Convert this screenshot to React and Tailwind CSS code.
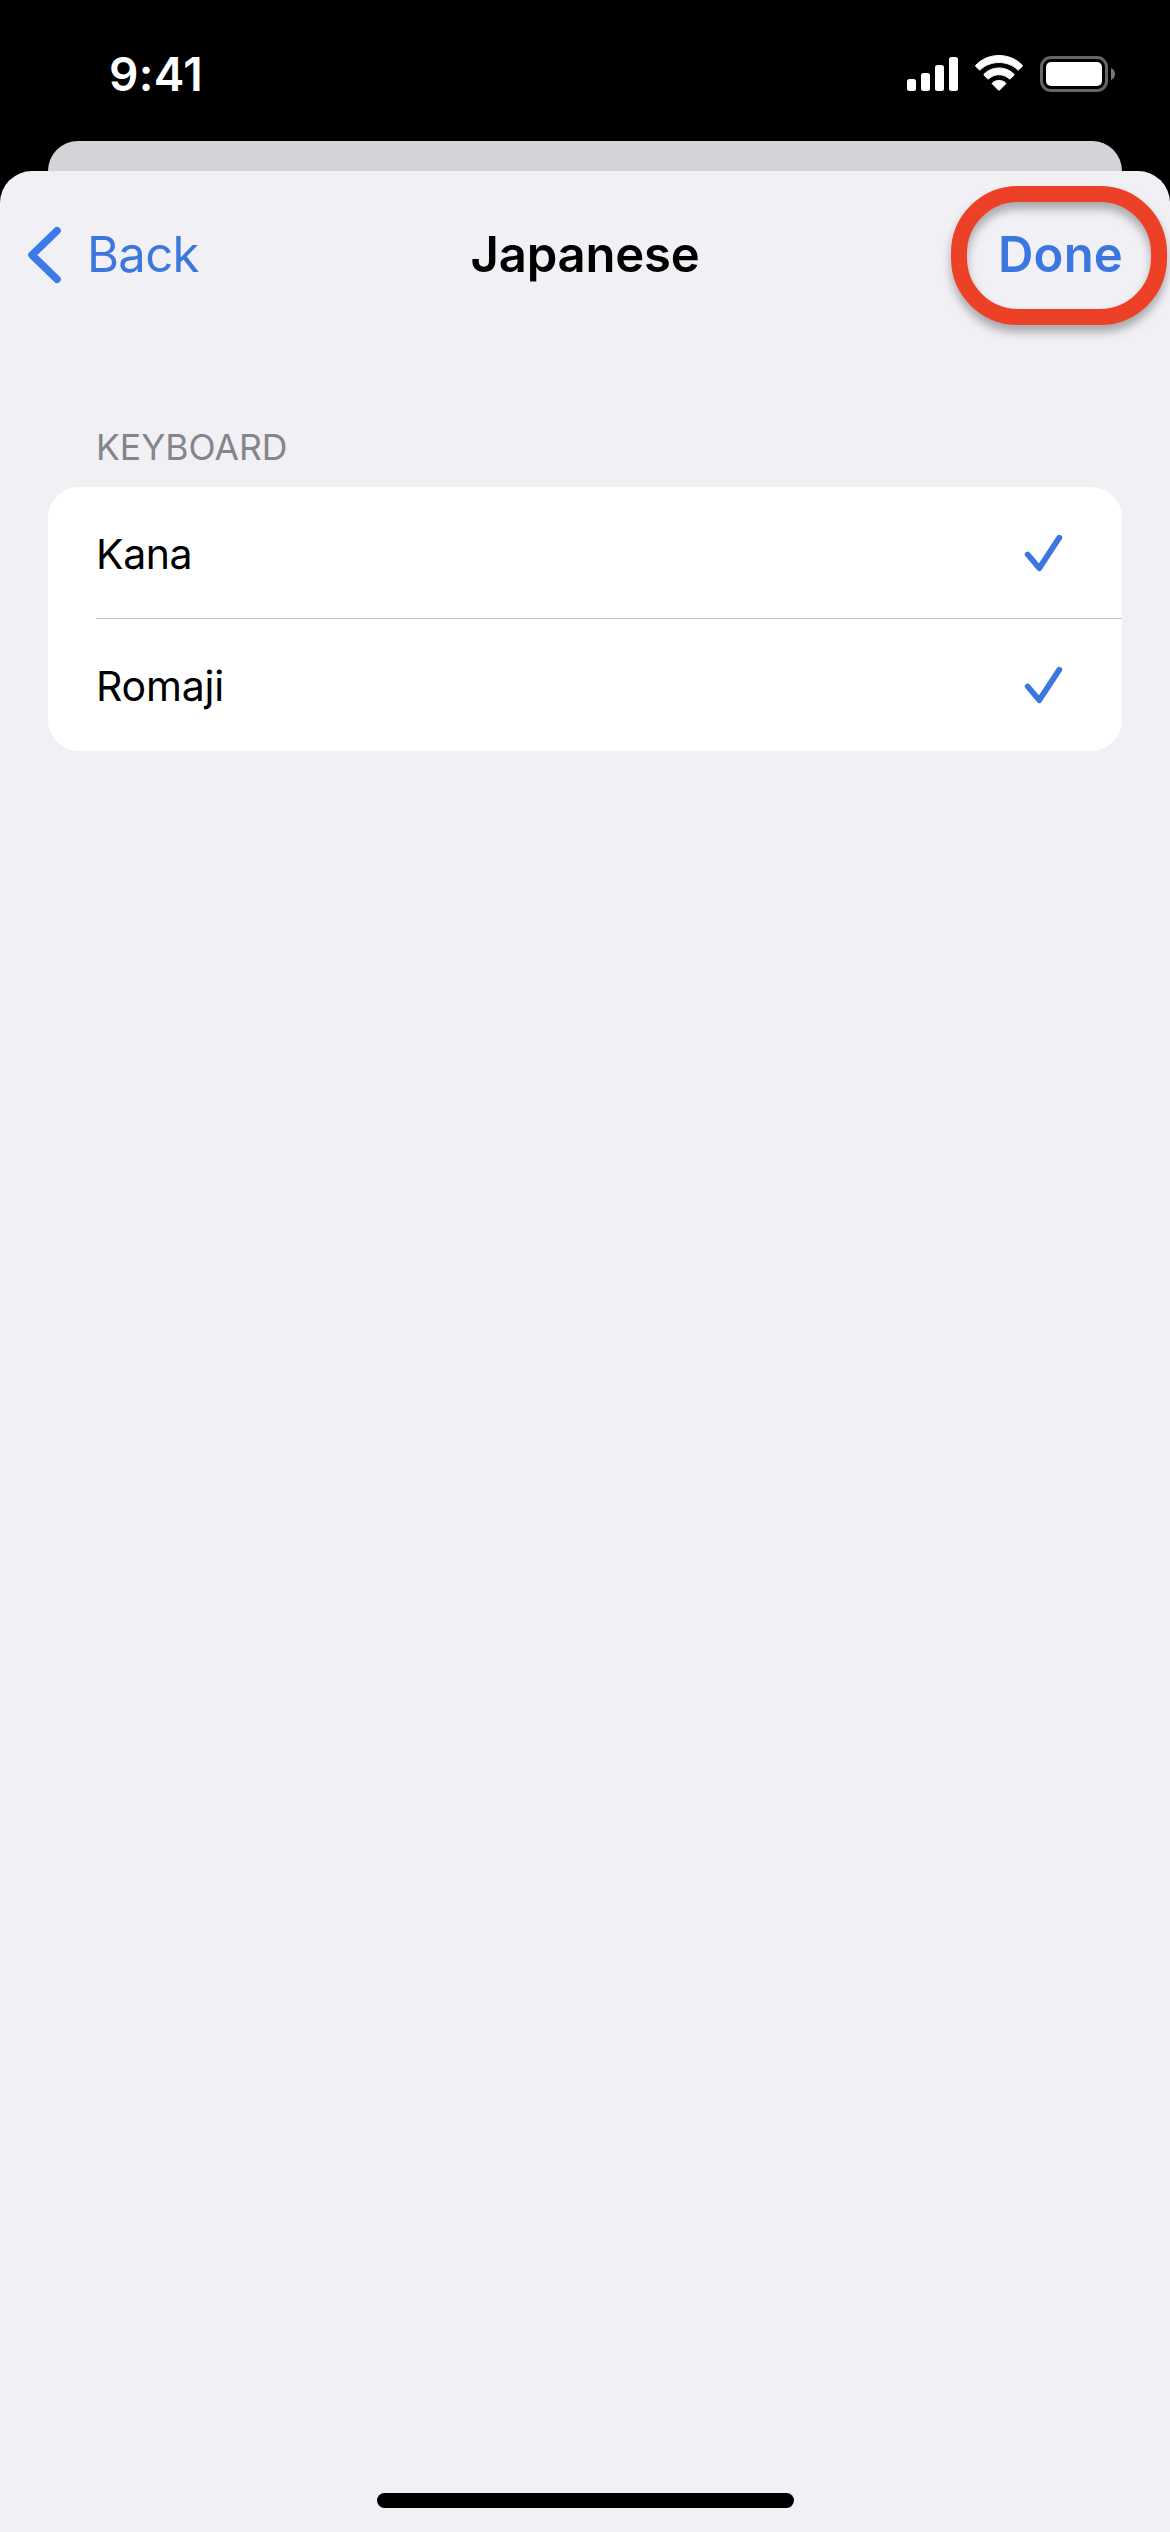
const keyboards = [
    { name: 'Kana', enabled: true, tracking: 'tracking-[-0.4px]' },
    { name: 'Romaji', enabled: true, tracking: 'tracking-[-0.2px]' }
];

const SignalIcon = () => (
    <svg width="51" height="34" viewBox="0 0 51 34" fill="#fff">
        <rect x="0" y="22" width="9" height="12" rx="2.5" />
        <rect x="14" y="16" width="9" height="18" rx="2.5" />
        <rect x="28" y="8" width="9" height="26" rx="2.5" />
        <rect x="42" y="0" width="9" height="34" rx="2.5" />
    </svg>
);

const WifiIcon = () => (
    <svg width="48" height="36" viewBox="0 0 48 36" fill="#fff" stroke="#fff" strokeLinejoin="round">
        <path strokeWidth="1" d="M24 .5C33 .5 41.200 4 47.300 10.300Q47.700 10.800 47.300 11.300L43.700 14.800Q43.200 15.200 42.700 14.800C37.600 9.900 31 7.500 24 7.500S10.400 9.900 5.300 14.800Q4.800 15.200 4.300 14.800L.7 11.300Q.3 10.800 .7 10.300C6.800 4 15 .5 24 .5Z" />
        <path strokeWidth="1" d="M24 13C29.800 13 35 15.200 39 19.200Q39.300 19.700 39 20.200L35.300 23.800Q34.800 24.200 34.300 23.800C31.500 21.200 28 19.700 24 19.700S16.500 21.200 13.700 23.800Q13.200 24.200 12.700 23.800L9 20.200Q8.700 19.700 9 19.200C13 15.200 18.200 13 24 13Z" />
        <path strokeWidth="1" d="M24 25.400C26.500 25.400 28.800 26.300 30.600 27.900Q31 28.400 30.600 28.900L24.500 35.100Q24 35.500 23.500 35.100L17.400 28.900Q17 28.400 17.400 27.900C19.200 26.300 21.500 25.400 24 25.400Z" />
    </svg>
);

const BatteryIcon = () => (
    <svg width="76" height="36" viewBox="0 0 76 36">
        <rect x="1.500" y="1.500" width="65" height="33" rx="9.500" fill="none" stroke="#666" strokeWidth="3" />
        <rect x="6" y="6" width="56" height="24" rx="5" fill="#fff" />
        <path d="M71 12c2.500 1 4 3.300 4 6s-1.500 5-4 6z" fill="#777" />
    </svg>
);

const CheckIcon = () => (
    <svg width="44" height="44" viewBox="0 0 44 44" fill="none" stroke="#3c77e0" strokeWidth="5.800" strokeLinecap="round" strokeLinejoin="round">
        <path d="M6.700 23.500 18.300 37.200 38.300 6.700" />
    </svg>
);

const StatusBar = () => (
    <div className="flex h-[141px] justify-between bg-black pl-[109px] pr-[54px] text-white">
        <span className="mt-11 text-[46px] leading-[61px] font-semibold tracking-[0.3px]">9:41</span>
        <div className="mt-14 flex h-9">
            <div className="mr-[17px] mt-px">
                <SignalIcon />
            </div>
            <div className="mr-[17px] -mt-px">
                <WifiIcon />
            </div>
            <BatteryIcon />
        </div>
    </div>
);

const NavBar = () => (
    <header className="relative grid h-[168px] grid-cols-3 items-center text-[49px] leading-[60px]">
        <button className="flex items-center pl-[26px] text-left text-[#3c77e0]">
            <svg width="36" height="58" viewBox="0 0 36 58" fill="none" stroke="#3c7aea" strokeWidth="7.500" strokeLinecap="round" strokeLinejoin="round">
                <path d="M31 4.700 6 29 31 53.300" />
            </svg>
            <span className="ml-[25px] tracking-[-0.7px]">Back</span>
        </button>
        <h1 className="text-center font-semibold tracking-[-0.2px] text-black">Japanese</h1>
        <button className="pr-[47px] text-right font-semibold tracking-[0.2px] text-[#3c77e0]">Done</button>
        {/* marker around the Done button */}
        <div className="pointer-events-none absolute top-[15px] right-[3px] h-[139px] w-[216px] rounded-[67px] border-[16px] border-[#ec4126] drop-shadow-[0_7px_5px_rgba(0,0,0,0.3)]"></div>
    </header>
);

const KeyboardList = () => (
    <section className="mx-12 mt-[91px]">
        <h2 className="mb-[21px] pl-12 text-[35.500px] leading-9 text-[#85858b]">KEYBOARD</h2>
        <ul className="overflow-hidden rounded-[31px] bg-white pl-12">
            {keyboards.map((item) => (
                <li key={item.name} className="flex h-[132px] items-center justify-between border-b border-[#c3c3c7] pr-[57px] last:border-b-0">
                    <span className={`mt-[2px] text-[41px] leading-[50px] text-black ${item.tracking}`}>{item.name}</span>
                    {item.enabled && <CheckIcon />}
                </li>
            ))}
        </ul>
    </section>
);

export default function App() {
    return (
        <div className="flex h-[2532px] w-[1170px] flex-col overflow-hidden bg-black font-[Inter,sans-serif]">
            <StatusBar />
            <div className="mx-12 h-[30px] shrink-0 rounded-t-[30px] bg-[#d4d3d8]"></div>
            <main className="flex flex-1 flex-col rounded-t-[32px] bg-[#f1f0f5]">
                <NavBar />
                <KeyboardList />
                <div className="mx-auto mt-auto mb-6 h-[15px] w-[417px] rounded-full bg-black"></div>
            </main>
        </div>
    );
}
